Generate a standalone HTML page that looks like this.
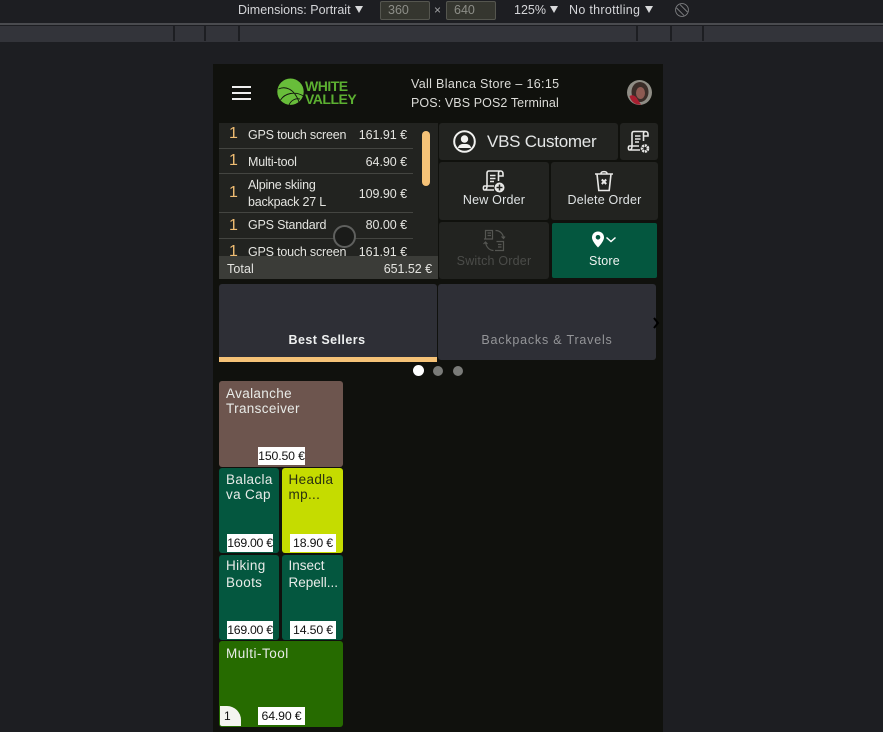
<!DOCTYPE html>
<html><head><meta charset="utf-8"><style>
*{box-sizing:border-box;margin:0;padding:0}
html,body{width:883px;height:732px;overflow:hidden;background:#1d1e22;font-family:"Liberation Sans",sans-serif}
.a{position:absolute}
.t{position:absolute;white-space:nowrap;font-size:12.5px;line-height:15px;letter-spacing:-.2px;color:#e4e4e0}
.r{text-align:right;letter-spacing:-.05px}
.q{position:absolute;color:#f0bd73;font-size:16px;line-height:18px;left:229px}
.sep{position:absolute;left:219px;width:194px;height:1px;background:#444541}
.btn{position:absolute;background:#222320;border-radius:3px}
.lab{position:absolute;left:0;right:0;text-align:center;font-size:12.5px;letter-spacing:.2px;color:#dfe3e4;line-height:15px}
.tile{position:absolute;border-radius:3px;color:#e8ebe8;font-size:13.5px;line-height:15px;letter-spacing:.35px;padding:5px 0 0 7px}
.pr{position:absolute;background:#fff;color:#111;font-size:12.3px;line-height:18px;height:18px;text-align:center;letter-spacing:-.15px;white-space:nowrap;overflow:hidden}
svg{position:absolute;overflow:visible}
</style></head><body>
<div class="a" style="left:0;top:23px;width:883px;height:2px;background:#4a4b4f"></div>
<div class="a" style="left:0;top:26px;width:883px;height:16px;background:#33343a"></div>
<div class="a" style="left:173px;top:26px;width:2px;height:15px;background:#1d1e22"></div>
<div class="a" style="left:204px;top:26px;width:2px;height:15px;background:#1d1e22"></div>
<div class="a" style="left:238px;top:26px;width:2px;height:15px;background:#1d1e22"></div>
<div class="a" style="left:636px;top:26px;width:2px;height:15px;background:#1d1e22"></div>
<div class="a" style="left:670px;top:26px;width:2px;height:15px;background:#1d1e22"></div>
<div class="a" style="left:702px;top:26px;width:2px;height:15px;background:#1d1e22"></div>
<div class="t" style="left:238px;top:3px;color:#d4d5d8;font-size:12.5px;letter-spacing:0">Dimensions: Portrait</div>
<svg style="left:355px;top:6px" width="8" height="8"><path d="M0 0H8L4 7Z" fill="#d8d9db"/></svg>
<div class="a" style="left:380px;top:1px;width:50px;height:19px;background:#35362f;border:1px solid #55564f;border-radius:2px;color:#8d8e88;font-size:12.5px;line-height:17px;padding-left:7px">360</div>
<div class="t" style="left:434px;top:3px;color:#a2a3a5;font-size:12px">×</div>
<div class="a" style="left:446px;top:1px;width:50px;height:19px;background:#35362f;border:1px solid #55564f;border-radius:2px;color:#8d8e88;font-size:12.5px;line-height:17px;padding-left:7px">640</div>
<div class="t" style="left:514px;top:3px;color:#d4d5d8;letter-spacing:0">125%</div>
<svg style="left:550px;top:6px" width="8" height="8"><path d="M0 0H8L4 7Z" fill="#d8d9db"/></svg>
<div class="t" style="left:569px;top:3px;color:#d4d5d8;letter-spacing:.3px">No throttling</div>
<svg style="left:645px;top:6px" width="8" height="8"><path d="M0 0H8L4 7Z" fill="#d8d9db"/></svg>
<svg style="left:675px;top:3px" width="14" height="14" viewBox="0 0 14 14" fill="none" stroke="#7f8083" stroke-width=".9"><circle cx="7" cy="7" r="6.4"/><path d="M1.600 5L9 12.400M5 1.600L12.400 9"/></svg>

<div class="a" style="left:213px;top:64px;width:450px;height:668px;background:#10110d"></div>

<div class="a" style="left:232px;top:86px;width:19px;height:2px;background:#eee"></div>
<div class="a" style="left:232px;top:92px;width:19px;height:2px;background:#eee"></div>
<div class="a" style="left:232px;top:98px;width:19px;height:2px;background:#eee"></div>

<svg style="left:277px;top:78px" width="28" height="28" viewBox="0 0 28 28"><circle cx="13.500" cy="13.700" r="13.200" fill="#68bd3a"/><path d="M1.500 11C8 8 17 10 22 24M3.500 22C8 15 18 13 26.500 18M12 27C14 22 19 20 23 21" fill="none" stroke="#10110d" stroke-width=".9"/></svg>
<div class="a" style="left:305px;top:80px;font-size:14px;line-height:12.500px;font-weight:700;color:#5cb031;letter-spacing:-.5px;white-space:nowrap">WHITE<br>VALLEY</div>

<div class="t" style="left:411px;top:77px;letter-spacing:.33px;color:#dcdcd8">Vall Blanca Store – 16:15</div>
<div class="t" style="left:411px;top:96px;letter-spacing:.1px;color:#dcdcd8">POS: VBS POS2 Terminal</div>

<svg style="left:627px;top:80px" width="25" height="25" viewBox="0 0 25 25"><circle cx="12.500" cy="12.500" r="12.500" fill="#8f8d85"/><ellipse cx="13" cy="12" rx="8.500" ry="10" fill="#3a2d28"/><ellipse cx="13.500" cy="13" rx="4.500" ry="6" fill="#8d5a52"/><path d="M2.500 16C6 14 9 16 11 20L14 24.500C9 25.500 4 22 2.500 16Z" fill="#a81f30"/></svg>

<!-- ticket -->
<div class="a" style="left:219px;top:123px;width:219px;height:133px;background:#222320;overflow:hidden"></div>
<div class="sep" style="top:148px"></div>
<div class="sep" style="top:173px"></div>
<div class="sep" style="top:212px"></div>
<div class="sep" style="top:238px"></div>
<div class="q" style="top:125px">1</div>
<div class="q" style="top:152px">1</div>
<div class="q" style="top:184px">1</div>
<div class="q" style="top:217px">1</div>
<div class="q" style="top:243px;height:13px;overflow:hidden">1</div>
<div class="t" style="left:248px;top:128px">GPS touch screen</div>
<div class="t r" style="right:476px;top:128px">161.91 €</div>
<div class="t" style="left:248px;top:155px">Multi-tool</div>
<div class="t r" style="right:476px;top:155px">64.90 €</div>
<div class="t" style="left:248px;top:177px;line-height:17px">Alpine skiing<br>backpack 27 L</div>
<div class="t r" style="right:476px;top:187px">109.90 €</div>
<div class="t" style="left:248px;top:218px">GPS Standard</div>
<div class="t r" style="right:476px;top:218px">80.00 €</div>
<div class="t" style="left:248px;top:245px;height:11px;overflow:hidden">GPS touch screen</div>
<div class="t r" style="right:476px;top:245px;height:11px;overflow:hidden">161.91 €</div>
<div class="a" style="left:422px;top:131px;width:8px;height:55px;background:#f5c277;border-radius:4px"></div>
<div class="a" style="left:333px;top:225px;width:23px;height:23px;border-radius:50%;background:#1a1b19;border:2px solid #5f605e"></div>
<div class="a" style="left:219px;top:256px;width:219px;height:23px;background:#3b3c38"></div>
<div class="t" style="left:227px;top:262px;letter-spacing:.1px">Total</div>
<div class="t r" style="right:451px;top:262px">651.52 €</div>

<!-- customer -->
<div class="btn" style="left:439px;top:123px;width:179px;height:37px"></div>
<svg style="left:453px;top:130px" width="23" height="23" viewBox="0 0 23 23"><circle cx="11.500" cy="11.500" r="10.300" fill="none" stroke="#f2f2f0" stroke-width="2"/><circle cx="11.500" cy="9" r="3.700" fill="#f2f2f0"/><path d="M5 17.500C6 14 9 14 11.500 14S17 14 18 17.500V18H5Z" fill="#f2f2f0"/></svg>
<div class="t" style="left:487px;top:132px;font-size:17px;line-height:19px;letter-spacing:-.25px;color:#e4e6e6">VBS Customer</div>
<div class="btn" style="left:620px;top:123px;width:38px;height:37px"></div>
<svg style="left:627px;top:130px" width="24" height="24" viewBox="0 0 24 24" fill="none" stroke="#e8e8e6" stroke-width="1.600"><path d="M5 16V3.500C5 2 6 1.500 7 1.500H18.500C17 1.500 16.500 2.500 16.500 3.500V11M5 16H2.500C1 16 1 20 2.500 20H13M2.500 20C4 20 5 19 5 16H12M18.500 1.500C20 1.500 21 2.500 21 4V6H16.500M8 6H13.500M8 9H13.500M8 12H12"/><circle cx="18" cy="18.500" r="3" stroke-width="2.600" stroke-dasharray="2 .7"/></svg>

<div class="btn" style="left:439px;top:162px;width:110px;height:58px"></div>
<svg style="left:482px;top:170px" width="24" height="24" viewBox="0 0 24 24" fill="none" stroke="#e8e8e6" stroke-width="1.600"><path d="M5 16V3C5 1.500 6 1 7 1H18.500C17 1 16.500 2 16.500 3V11M5 16H2.500C1 16 1 20 2.500 20H12M2.500 20C4 20 5 19 5 16H12M18.500 1C20 1 21 2 21 4V6H16.500M8 5.500H13.500M8 8.500H13.500M8 11.500H12"/><circle cx="17.500" cy="17.500" r="5" fill="#e8e8e6" stroke="none"/><path d="M17.500 14.500V20.500M14.500 17.500H20.500" stroke="#222320" stroke-width="1.500"/></svg>
<div class="btn" style="left:551px;top:162px;width:107px;height:58px"></div>
<svg style="left:594px;top:170px" width="20" height="22" viewBox="0 0 20 22" fill="none" stroke="#e8e8e6" stroke-width="1.600"><path d="M1 4H19M7 3.500C7 1 13 1 13 3.500M3 4L4.800 20.500H15.200L17 4"/><path d="M7.800 9.500L12.200 14M12.200 9.500L7.800 14" stroke-width="2"/></svg>
<div class="a" style="left:439px;top:162px;width:110px;height:58px"><div class="lab" style="top:31px">New Order</div></div>
<div class="a" style="left:551px;top:162px;width:107px;height:58px"><div class="lab" style="top:31px">Delete Order</div></div>

<div class="btn" style="left:439px;top:222px;width:110px;height:57px"></div>
<svg style="left:483px;top:229px" width="23" height="23" viewBox="0 0 23 23" fill="none" stroke="#555652" stroke-width="1.200"><path d="M2.500 10V1.500H9.500V10H1M4.500 4H8M4.500 6.500H8M13.500 12.500H20.500V21.500H12M15 15.500H18.500M15 18H18.500M12.500 1.500C17 1.500 20.500 5 20.500 9.500M18.500 7.500L20.500 9.500L22 7.500M2.500 13C3 18 6.500 21.500 10.500 21.500M.500 15L2.500 13L4.500 15"/></svg>
<div class="a" style="left:439px;top:222px;width:110px;height:57px"><div class="lab" style="top:32px;color:#4b4c49">Switch Order</div></div>
<div class="a" style="left:552px;top:223px;width:105px;height:55px;background:#04573f;border-radius:2px"><div class="lab" style="top:31px;color:#eef2f0">Store</div></div>
<svg style="left:591px;top:231px" width="28" height="18" viewBox="0 0 28 18"><path d="M7 0.500C3.500 0.500 1 3 1 6.500C1 10.500 7 16.500 7 16.500S13 10.500 13 6.500C13 3 10.500 .5 7 .5Z" fill="#fff"/><circle cx="7" cy="6.300" r="2.300" fill="#04573f"/><path d="M15.500 6.500L20 10.500L24.500 6.500" fill="none" stroke="#fff" stroke-width="1.500"/></svg>

<!-- categories -->
<div class="a" style="left:219px;top:284px;width:218px;height:78px;background:#2e2f36;border-radius:3px 3px 0 0"></div>
<div class="a" style="left:219px;top:357px;width:218px;height:5px;background:#f5c277"></div>
<div class="a" style="left:218px;top:333px;width:218px;text-align:center;font-size:12.500px;line-height:15px;font-weight:700;letter-spacing:.45px;color:#eef0f0">Best Sellers</div>
<div class="a" style="left:438px;top:284px;width:218px;height:76px;background:#2e2f36;border-radius:3px"></div>
<div class="a" style="left:438px;top:333px;width:218px;height:15px;text-align:center;font-size:12.500px;line-height:15px;letter-spacing:.8px;color:#949598">Backpacks &amp; Travels</div>
<svg style="left:653px;top:317px" width="6" height="12" viewBox="0 0 6 12"><path d="M1 1L5 6L1 11" fill="none" stroke="#000" stroke-width="2"/></svg>
<div class="a" style="left:413px;top:365px;width:11px;height:11px;border-radius:50%;background:#fff"></div>
<div class="a" style="left:433px;top:366px;width:10px;height:10px;border-radius:50%;background:#7a7b78"></div>
<div class="a" style="left:453px;top:366px;width:10px;height:10px;border-radius:50%;background:#7a7b78"></div>

<!-- tiles -->
<div class="tile" style="left:219px;top:381px;width:124px;height:86px;background:#6d554e">Avalanche<br>Transceiver</div>
<div class="pr" style="left:258px;top:447px;width:47px">150.50 €</div>
<div class="tile" style="left:219px;top:468px;width:60px;height:85px;background:#04573f;padding-top:4px">Balacla<br>va Cap</div>
<div class="pr" style="left:227px;top:534px;width:46px;letter-spacing:-.3px">169.00 €</div>
<div class="tile" style="left:282px;top:468px;width:61px;height:85px;background:#c5dc00;color:#2a3010;padding-top:4px;padding-left:6.500px">Headla<br>mp...</div>
<div class="pr" style="left:290px;top:534px;width:46px">18.90 €</div>
<div class="tile" style="left:219px;top:555px;width:60px;height:85px;background:#04573f;line-height:17px;padding-top:2px">Hiking<br>Boots</div>
<div class="pr" style="left:227px;top:621px;width:46px;letter-spacing:-.3px">169.00 €</div>
<div class="tile" style="left:282px;top:555px;width:61px;height:85px;background:#04573f;line-height:17px;padding-top:2px;padding-left:6.500px;letter-spacing:0">Insect<br>Repell...</div>
<div class="pr" style="left:290px;top:621px;width:46px">14.50 €</div>
<div class="tile" style="left:219px;top:641px;width:124px;height:86px;background:#266b00;padding-top:5px;letter-spacing:.5px">Multi-Tool</div>
<div class="pr" style="left:258px;top:707px;width:47px">64.90 €</div>
<div class="a" style="left:220px;top:706px;width:21px;height:20px;background:#f4f4f0;border-radius:0 14px 0 2px;color:#111;font-size:12px;line-height:20px;padding-left:4px">1</div>
</body></html>
